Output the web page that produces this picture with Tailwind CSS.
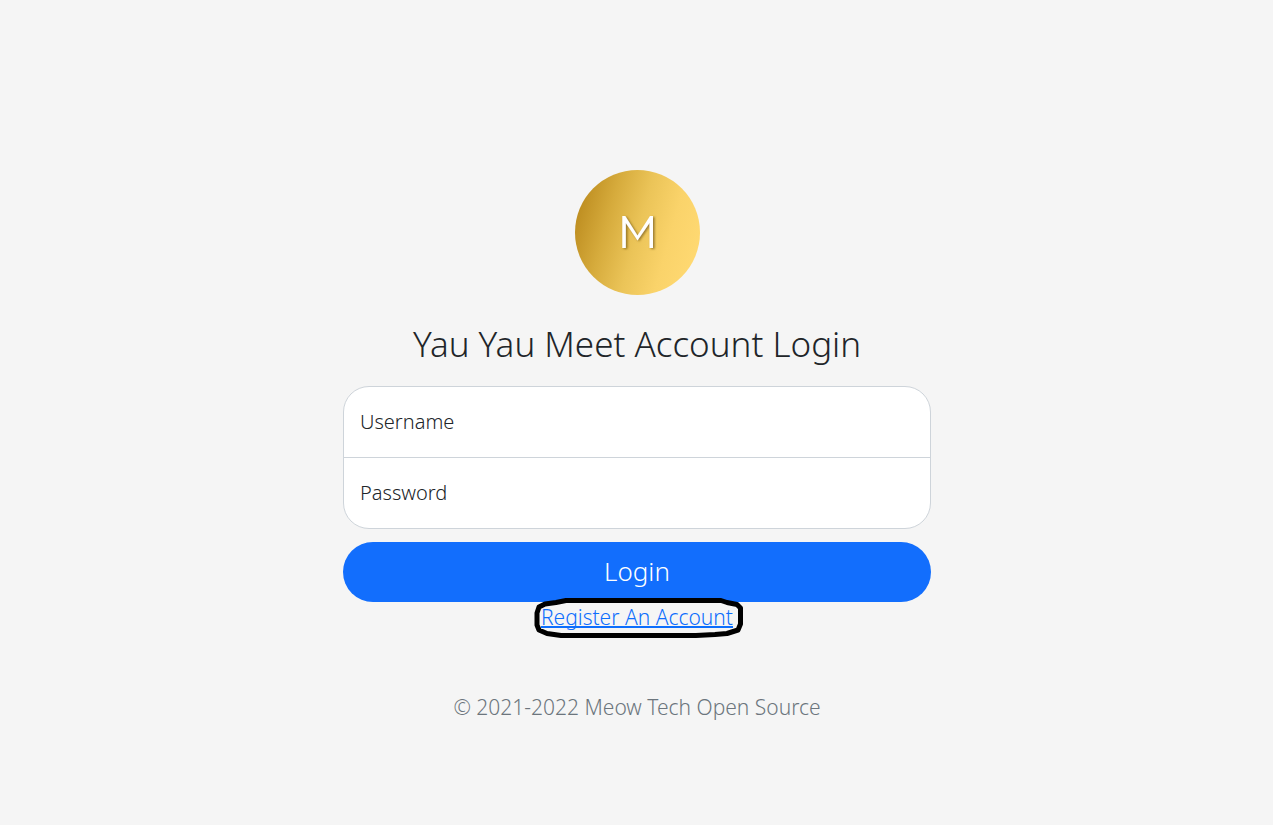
<!DOCTYPE html>
<html lang="en">
<head>
<meta charset="utf-8">
<meta name="viewport" content="width=device-width, initial-scale=1">
<title>Yau Yau Meet Account Login</title>
<script src="https://cdn.jsdelivr.net/npm/@tailwindcss/browser@4"></script>
</head>
<body class="flex min-h-screen items-center justify-center bg-[#f5f5f5] pl-px font-['Noto_Sans','Open_Sans',sans-serif] text-xl font-light text-[#212529]">
<main class="w-full max-w-[588px] pt-[67px] text-center">
  <form class="flex flex-col items-center">
    <svg class="ml-px size-[125px]" viewBox="0 0 125 125" role="img" aria-label="Meow Tech logo">
      <defs>
        <linearGradient id="gold" x1="0" y1="0.36" x2="1" y2="0.64">
          <stop offset="0" stop-color="#bd8d20"/>
          <stop offset="0.25" stop-color="#d6ab3c"/>
          <stop offset="0.5" stop-color="#ebc458"/>
          <stop offset="0.75" stop-color="#fad36a"/>
          <stop offset="1" stop-color="#ffd972"/>
        </linearGradient>
        <filter id="shade" x="-20%" y="-20%" width="150%" height="150%">
          <feDropShadow dx="1.5" dy="1" stdDeviation="1" flood-color="#6b5010" flood-opacity="0.7"/>
        </filter>
      </defs>
      <circle cx="62.500" cy="62.500" r="62.500" fill="url(#gold)"/>
      <path d="M47.300 78V46H50.300L62.500 65.500L75 46H78V78H74.500V53L62.500 70.500L50.800 53V78Z" fill="#fff" filter="url(#shade)"/>
    </svg>
    <h1 class="mt-[26px] mb-[19px] text-[35px] leading-[46px]">Yau Yau Meet Account Login</h1>
    <div class="w-full rounded-[26px] border border-[#ced4da] bg-white">
      <div class="relative h-[71px] border-b border-[#ced4da]">
        <input id="username" type="text" class="peer size-full rounded-t-[25px] bg-transparent px-4 outline-none" placeholder=" ">
        <label for="username" class="pointer-events-none absolute inset-y-0 left-4 flex items-center not-peer-placeholder-shown:hidden">Username</label>
      </div>
      <div class="relative h-[70px]">
        <input id="password" type="password" class="peer size-full rounded-b-[25px] bg-transparent px-4 outline-none" placeholder=" ">
        <label for="password" class="pointer-events-none absolute inset-y-0 left-4 flex items-center not-peer-placeholder-shown:hidden">Password</label>
      </div>
    </div>
    <button type="submit" class="mt-[13px] h-[60px] w-full rounded-full bg-[#126efd] pb-0.5 text-[26px] text-white">Login</button>
    <div class="relative text-[21px] leading-[30px]">
      <a href="#register" class="text-[#0d6efd] underline decoration-2 [text-decoration-skip-ink:none]">Register An Account</a>
      <svg class="pointer-events-none absolute -top-1 left-1/2 h-10 w-[210px] max-w-none -translate-x-[103px]" viewBox="0 0 210 40" fill="none" stroke="#000" stroke-width="5" stroke-linejoin="round" aria-hidden="true">
        <path d="M11 6L22 4.500L32 2.500H187L193 4.500L203 6.500L206.500 10V26L204 32L193 35.500L181 36.500L162 37.500H27L13 35.500L5 32L3 27V15L5 9Z"/>
      </svg>
    </div>
    <p class="mt-15 text-[21px] leading-[30px] text-[#6c757d]">© 2021-2022 Meow Tech Open Source</p>
  </form>
</main>
</body>
</html>
